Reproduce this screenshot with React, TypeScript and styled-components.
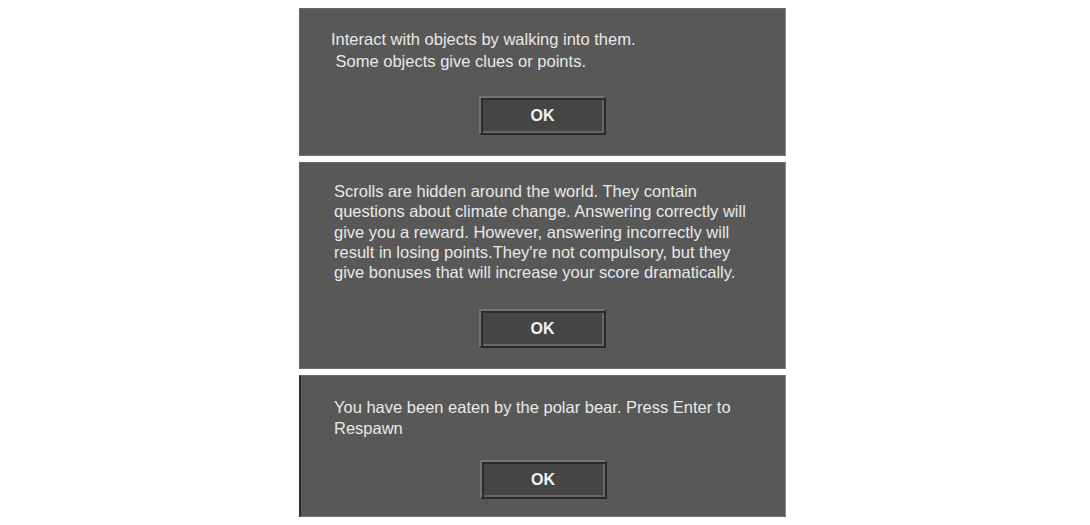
import React from 'react'
import styled, {createGlobalStyle} from 'styled-components'

const GlobalStyle = createGlobalStyle`
  html, body {
    margin: 0;
    padding: 0;
    background: #ffffff;
    overflow: hidden;
  }
  body {
    font-family: 'Liberation Sans', Arial, sans-serif;
  }
`

interface Dialog {
  lines: string[]
  height: number
  lineHeight: number
  padTop: number
  padBottom: number
  indent: number
  dark?: boolean
}

const dialogs: Dialog[] = [
  {
    lines: ['Interact with objects by walking into them.', ' Some objects give clues or points.'],
    height: 148,
    lineHeight: 21.5,
    padTop: 20,
    padBottom: 20,
    indent: 31,
  },
  {
    lines: [
      'Scrolls are hidden around the world. They contain',
      'questions about climate change. Answering correctly will',
      'give you a reward. However, answering incorrectly will',
      "result in losing points.They're not compulsory, but they",
      'give bonuses that will increase your score dramatically.',
    ],
    height: 207,
    lineHeight: 20.3,
    padTop: 18,
    padBottom: 20,
    indent: 34,
  },
  {
    lines: ['You have been eaten by the polar bear. Press Enter to', 'Respawn'],
    height: 142,
    lineHeight: 20.5,
    padTop: 21,
    padBottom: 17,
    indent: 33,
    dark: true,
  },
]

const App: React.FC = () => {
  return (
    <Stage>
      <GlobalStyle />
      {dialogs.map((d, i) => (
        <Panel key={i} $height={d.height} $padTop={d.padTop} $padBottom={d.padBottom} $dark={d.dark}>
          <Message $lineHeight={d.lineHeight} $indent={d.indent}>
            {d.lines.map((line, j) => (
              <Line key={j}>{line}</Line>
            ))}
          </Message>
          <OkButton type="button">OK</OkButton>
        </Panel>
      ))}
    </Stage>
  )
}

const Stage = styled.div`
  display: flex;
  flex-direction: column;
  gap: 6px;
  padding: 8px 0 0 299px;
  width: 487px;
`

const Panel = styled.div<{$height: number; $padTop: number; $padBottom: number; $dark?: boolean}>`
  box-sizing: border-box;
  display: flex;
  flex-direction: column;
  align-items: stretch;
  height: ${(p) => p.$height}px;
  padding: ${(p) => p.$padTop}px 0 ${(p) => p.$padBottom}px 0;
  background: #585858;
  border-top: 1px solid #6a6a6a;
  border-right: 1px solid #8a8a8a;
  border-bottom: 1px solid #707070;
  border-left: ${(p) => (p.$dark ? '2px solid #2e2e2e' : '1px solid #626262')};
`

const Message = styled.div<{$lineHeight: number; $indent: number}>`
  color: #e8e8e8;
  font-size: 16.5px;
  line-height: ${(p) => p.$lineHeight}px;
  padding-left: ${(p) => p.$indent}px;
`

const Line = styled.div`
  white-space: pre;
`

const OkButton = styled.button`
  box-sizing: border-box;
  align-self: center;
  margin-top: auto;
  width: 127px;
  height: 39px;
  padding: 0;
  background: #454545;
  border: 2px solid;
  border-color: #727272 #2a2a2a #2a2a2a #727272;
  box-shadow: inset 2px 2px 0 #2c2c2c, inset -2px -2px 0 #666666;
  color: #f2f2f2;
  font-family: 'Liberation Sans', Arial, sans-serif;
  font-size: 16px;
  font-weight: 700;
  cursor: pointer;
`

export default App
